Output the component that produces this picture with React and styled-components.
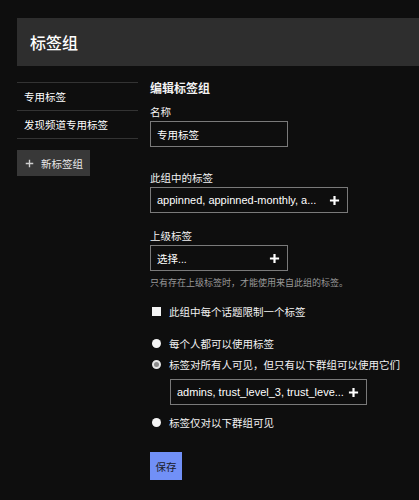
import React from 'react';
import styled, { createGlobalStyle } from 'styled-components';

const GlobalStyle = createGlobalStyle`
  html, body {
    margin: 0;
    padding: 0;
    background: #0e0e0e;
    overflow: hidden;
  }
  body {
    font-family: 'Liberation Sans', 'Noto Sans CJK SC', sans-serif;
    color: #f2f2f2;
  }
`;

const Page = styled.div`
  box-sizing: border-box;
  width: 100%;
  padding: 18px 0 0 17px;
`;

const Header = styled.div`
  background: #2e2e2e;
  height: 48px;
  display: flex;
  align-items: center;
  padding-left: 13px;
  font-size: 16px;
  font-weight: 500;
  color: #ffffff;
`;

const Body = styled.div`
  display: flex;
  gap: 12px;
  margin-top: 16px;
`;

const Sidebar = styled.div`
  width: 121px;
  flex-shrink: 0;
`;

const NavList = styled.div`
  border-top: 1px solid #333;
`;

const NavItem = styled.div`
  height: 27px;
  display: flex;
  align-items: center;
  padding-left: 7px;
  font-size: 10.5px;
  color: #ffffff;
  border-bottom: 1px solid #333;
`;

const NewButton = styled.button`
  margin-top: 11px;
  height: 26px;
  padding: 0 7px 0 8px;
  display: flex;
  align-items: center;
  gap: 7px;
  background: #383838;
  border: none;
  color: #e8e8e8;
  font-family: inherit;
  font-size: 10.5px;
`;

const Main = styled.div`
  flex: 1;
  min-width: 0;
  display: flex;
  flex-direction: column;
  white-space: nowrap;
`;

const Heading = styled.h3`
  margin: 0;
  font-size: 12px;
  font-weight: 700;
  line-height: 16px;
  margin-top: -1px;
`;

const Label = styled.div`
  font-size: 10.5px;
  line-height: 14px;
  margin-top: ${(p) => p.$top || 0}px;
  margin-bottom: 2px;
`;

const Field = styled.div`
  box-sizing: border-box;
  width: ${(p) => p.$width}px;
  height: 26px;
  border: 1px solid #7a7a7a;
  display: flex;
  align-items: center;
  justify-content: space-between;
  gap: 4px;
  padding: 0 7px 0 5px;
  font-size: ${(p) => (p.$latin ? 11 : 10.5)}px;
  color: #ffffff;
  margin-left: ${(p) => p.$indent || 0}px;
  margin-top: ${(p) => p.$top || 0}px;
`;

const FieldText = styled.span`
  padding-left: 1px;
`;

const Hint = styled.div`
  font-size: 9px;
  line-height: 12px;
  color: #9a9a9a;
  margin-top: 6px;
`;

const OptionRow = styled.div`
  display: flex;
  align-items: center;
  gap: 8px;
  font-size: 10.5px;
  height: 16px;
  margin-top: ${(p) => p.$top}px;
  padding-left: 2px;
`;

const Box = styled.span`
  width: 9px;
  height: 9px;
  background: #f4f4f4;
  flex-shrink: 0;
`;

const Radio = styled.span`
  box-sizing: border-box;
  width: 9px;
  height: 9px;
  border-radius: 50%;
  background: ${(p) => (p.$checked ? '#8a8a8a' : '#f4f4f4')};
  border: ${(p) => (p.$checked ? '2px solid #e6e6e6' : 'none')};
  flex-shrink: 0;
`;

const SaveButton = styled.button`
  align-self: flex-start;
  margin-top: 22px;
  width: 32px;
  height: 28px;
  background: #7190f7;
  border: none;
  color: #1c1c2a;
  font-family: inherit;
  font-size: 10.5px;
  padding: 0;
`;

const Plus = ({ size = 11, color = '#fff', weight = 2.4 }) => (
  <svg width={size} height={size} viewBox="0 0 12 12" style={{ flexShrink: 0 }}>
    <path d="M6 1v10M1 6h10" stroke={color} strokeWidth={weight} />
  </svg>
);

const App = () => (
  <>
    <GlobalStyle />
    <Page>
      <Header>标签组</Header>
      <Body>
        <Sidebar>
          <NavList>
            <NavItem>专用标签</NavItem>
            <NavItem>发现频道专用标签</NavItem>
          </NavList>
          <NewButton>
            <Plus size={9} color="#cfcfcf" weight={1.8} />
            新标签组
          </NewButton>
        </Sidebar>
        <Main>
          <Heading>编辑标签组</Heading>
          <Label $top={8}>名称</Label>
          <Field $width={138}>
            <FieldText>专用标签</FieldText>
          </Field>
          <Label $top={24}>此组中的标签</Label>
          <Field $width={198} $latin>
            <FieldText>appinned, appinned-monthly, a...</FieldText>
            <Plus />
          </Field>
          <Label $top={16}>上级标签</Label>
          <Field $width={138}>
            <FieldText>选择...</FieldText>
            <Plus />
          </Field>
          <Hint>只有存在上级标签时，才能使用来自此组的标签。</Hint>
          <OptionRow $top={14}>
            <Box />
            此组中每个话题限制一个标签
          </OptionRow>
          <OptionRow $top={16}>
            <Radio />
            每个人都可以使用标签
          </OptionRow>
          <OptionRow $top={5}>
            <Radio $checked />
            标签对所有人可见，但只有以下群组可以使用它们
          </OptionRow>
          <Field $width={197} $indent={20} $top={7} $latin>
            <FieldText>admins, trust_level_3, trust_leve...</FieldText>
            <Plus />
          </Field>
          <OptionRow $top={9}>
            <Radio />
            标签仅对以下群组可见
          </OptionRow>
          <SaveButton>保存</SaveButton>
        </Main>
      </Body>
    </Page>
  </>
);

export default App;
